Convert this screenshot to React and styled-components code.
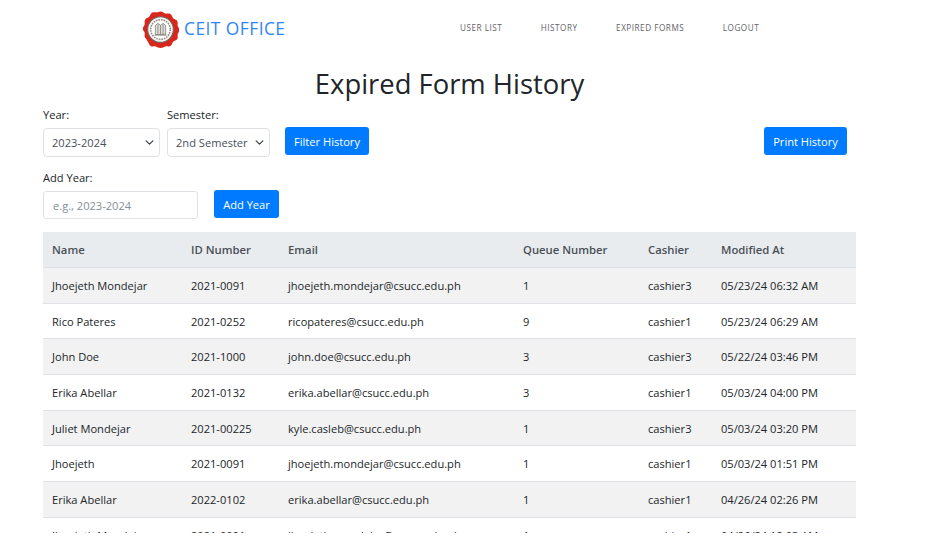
import React from "react";
import styled, { createGlobalStyle } from "styled-components";

const rows = [
  ["Jhoejeth Mondejar", "2021-0091", "jhoejeth.mondejar@csucc.edu.ph", "1", "cashier3", "05/23/24 06:32 AM"],
  ["Rico Pateres", "2021-0252", "ricopateres@csucc.edu.ph", "9", "cashier1", "05/23/24 06:29 AM"],
  ["John Doe", "2021-1000", "john.doe@csucc.edu.ph", "3", "cashier3", "05/22/24 03:46 PM"],
  ["Erika Abellar", "2021-0132", "erika.abellar@csucc.edu.ph", "3", "cashier1", "05/03/24 04:00 PM"],
  ["Juliet Mondejar", "2021-00225", "kyle.casleb@csucc.edu.ph", "1", "cashier3", "05/03/24 03:20 PM"],
  ["Jhoejeth", "2021-0091", "jhoejeth.mondejar@csucc.edu.ph", "1", "cashier1", "05/03/24 01:51 PM"],
  ["Erika Abellar", "2022-0102", "erika.abellar@csucc.edu.ph", "1", "cashier1", "04/26/24 02:26 PM"],
  ["Jhoejeth Mondejar", "2021-0091", "jhoejeth.mondejar@csucc.edu.ph", "1", "cashier1", "04/26/24 12:03 AM"],
];

const columns = ["Name", "ID Number", "Email", "Queue Number", "Cashier", "Modified At"];
const columnWidths = [139, 97, 235, 125, 73, 144];

const chevron =
  "data:image/svg+xml,%3csvg xmlns='http://www.w3.org/2000/svg' viewBox='0 0 16 16'%3e%3cpath fill='none' stroke='%23343a40' stroke-linecap='round' stroke-linejoin='round' stroke-width='2' d='M2 5l6 6 6-6'/%3e%3c/svg%3e";

const Seal = () => (
  <SealIcon width="37" height="37" viewBox="0 0 36 36" aria-hidden="true">
    <path
      fill="#d9261c"
      d="M18 .5c2.200 0 3 1.600 4.600 2 1.800.4 3.300-.5 5 .5 1.800 1 1.500 2.800 2.700 4 1.200 1.200 3 .9 4 2.700 1 1.700 0 3.200.5 5 .4 1.600 1.700 2 1.700 3.800s-1.300 2.200-1.700 3.800c-.5 1.800.5 3.300-.5 5-1 1.800-2.800 1.500-4 2.700-1.200 1.200-.9 3-2.700 4-1.700 1-3.200 0-5 .5-1.600.4-2.400 1.500-4.600 1.500s-3-1.100-4.600-1.500c-1.800-.5-3.300.5-5-.5-1.800-1-1.500-2.800-2.700-4-1.200-1.200-.9-3-2.700-4-1-1.700 0-3.200-.5-5-.4-1.600-1.700-2-1.700-3.800s1.300-2.200 1.700-3.800c.5-1.800-.5-3.300.5-5 1-1.800 2.800-1.500 4-2.700 1.200-1.200.9-3 2.700-4 1.700-1 3.200-.1 5-.5C15 2.100 15.800.5 18 .5z"
    />
    <circle cx="18" cy="18" r="12.500" fill="#f4f2ee" stroke="#6b665f" strokeWidth="1" />
    <circle cx="18" cy="18" r="9.500" fill="#fff" stroke="#8d8880" strokeWidth="1.400" strokeDasharray="1.500 1" />
    <path d="M13 23V14l2.500-2 2.500 2 2.500-2 2.500 2v9z" fill="#e2dfd9" stroke="#77726c" strokeWidth=".7" />
    <path d="M15.500 13v10M18 14v9M20.500 13v10M12 23.500h12" stroke="#77726c" strokeWidth=".7" fill="none" />
  </SealIcon>
);

const App = () => (
  <Page>
    <GlobalStyle />
    <Navbar>
      <Brand>
        <Seal />
        <BrandName>CEIT OFFICE</BrandName>
      </Brand>
      <NavLinks>
        <NavLink href="#">User List</NavLink>
        <NavLink href="#">History</NavLink>
        <NavLink href="#">Expired Forms</NavLink>
        <NavLink href="#">Logout</NavLink>
      </NavLinks>
    </Navbar>

    <Content>
      <Title>Expired Form History</Title>

      <FilterRow>
        <Field>
          <Label>Year:</Label>
          <Select $width={117} defaultValue="2023-2024">
            <option>2023-2024</option>
          </Select>
        </Field>
        <Field>
          <Label>Semester:</Label>
          <Select $width={103} defaultValue="2nd Semester">
            <option>2nd Semester</option>
          </Select>
        </Field>
        <FilterButton>Filter History</FilterButton>
        <PrintButton>Print History</PrintButton>
      </FilterRow>

      <AddRow>
        <Field>
          <Label>Add Year:</Label>
          <YearInput placeholder="e.g., 2023-2024" />
        </Field>
        <AddButton>Add Year</AddButton>
      </AddRow>

      <TableWrap>
        <Table>
          <colgroup>
            {columnWidths.map((width) => (
              <col key={width} width={width} />
            ))}
          </colgroup>
          <thead>
            <tr>
              {columns.map((column) => (
                <HeadCell key={column}>{column}</HeadCell>
              ))}
            </tr>
          </thead>
          <tbody>
            {rows.map((row, index) => (
              <Row key={index}>
                {row.map((value, cellIndex) => (
                  <Cell key={cellIndex}>{value}</Cell>
                ))}
              </Row>
            ))}
          </tbody>
        </Table>
      </TableWrap>
    </Content>
  </Page>
);

const GlobalStyle = createGlobalStyle`
  html, body {
    margin: 0;
    background: #fff;
  }

  * {
    box-sizing: border-box;
  }
`;

const Page = styled.div`
  width: 939px;
  height: 545px;
  overflow: hidden;
  background: #fff;
  color: #212529;
  font-family: "Open Sans", "Noto Sans", sans-serif;
  font-size: 11.100px;
`;

const Navbar = styled.nav`
  display: flex;
  align-items: center;
  height: 57px;
  padding-left: 142px;
`;

const Brand = styled.div`
  display: flex;
  align-items: center;
  gap: 5px;
  width: 318px;
`;

const SealIcon = styled.svg`
  margin-top: 2px;
`;

const BrandName = styled.span`
  margin-top: -2px;
  color: #2f86f6;
  font-size: 17.400px;
  letter-spacing: 0.45px;
`;

const NavLinks = styled.div`
  display: flex;
  gap: 38.500px;
  margin-top: -2px;
`;

const NavLink = styled.a`
  color: #5f6368;
  font-size: 8.200px;
  letter-spacing: 0.5px;
  text-decoration: none;
  text-transform: uppercase;
`;

const Content = styled.main`
  padding: 0 0 0 43px;
`;

const Title = styled.h1`
  width: 813px;
  margin: 7px 0 3px;
  font-size: 27.400px;
  font-weight: 400;
  line-height: 40px;
  text-align: center;
  white-space: nowrap;
`;

const FilterRow = styled.div`
  display: flex;
  align-items: flex-start;
  width: 804px;
`;

const AddRow = styled.div`
  display: flex;
  align-items: flex-start;
  margin-top: 13px;
`;

const Field = styled.div`
  display: flex;
  flex-direction: column;
  margin-right: 7px;
`;

const Label = styled.label`
  height: 21px;
  line-height: 16px;
`;

const Select = styled.select`
  width: ${(props) => props.$width}px;
  height: 29px;
  padding: 0 0 0 8px;
  appearance: none;
  border: 1px solid #dee2e6;
  border-radius: 4px;
  background: #fff url("${chevron}") no-repeat right 5px center / 9px 9px;
  color: #495057;
  font: inherit;
`;

const YearInput = styled.input`
  width: 155px;
  height: 28px;
  padding: 0 9px;
  border: 1px solid #dee2e6;
  border-radius: 3px;
  font: inherit;

  &::placeholder {
    color: #868e96;
  }
`;

const Button = styled.button`
  height: 28px;
  padding: 0 9px;
  border: 0;
  border-radius: 3px;
  background: #007bff;
  color: #fff;
  font: inherit;
  white-space: nowrap;
`;

const FilterButton = styled(Button)`
  width: 84px;
  margin: 20px 0 0 8px;
`;

const PrintButton = styled(Button)`
  width: 83px;
  margin: 20px 0 0 auto;
`;

const AddButton = styled(Button)`
  width: 65px;
  margin: 20px 0 0 9px;
`;

const TableWrap = styled.div`
  width: 813px;
  height: 301px;
  margin-top: 13px;
  overflow: hidden;
`;

const Table = styled.table`
  width: 813px;
  border-collapse: collapse;
  table-layout: fixed;
`;

const HeadCell = styled.th`
  height: 35.500px;
  padding: 0 9px;
  background: #e9ecef;
  border-bottom: 1px solid #dee2e6;
  color: #495057;
  font-size: 11.300px;
  font-weight: 600;
  text-align: left;
  white-space: nowrap;
`;

const Row = styled.tr`
  &:nth-child(odd) {
    background: #f2f2f2;
  }
`;

const Cell = styled.td`
  height: 35.700px;
  padding: 0 9px;
  border-bottom: 1px solid #dee2e6;
  white-space: nowrap;
`;

export default App;
